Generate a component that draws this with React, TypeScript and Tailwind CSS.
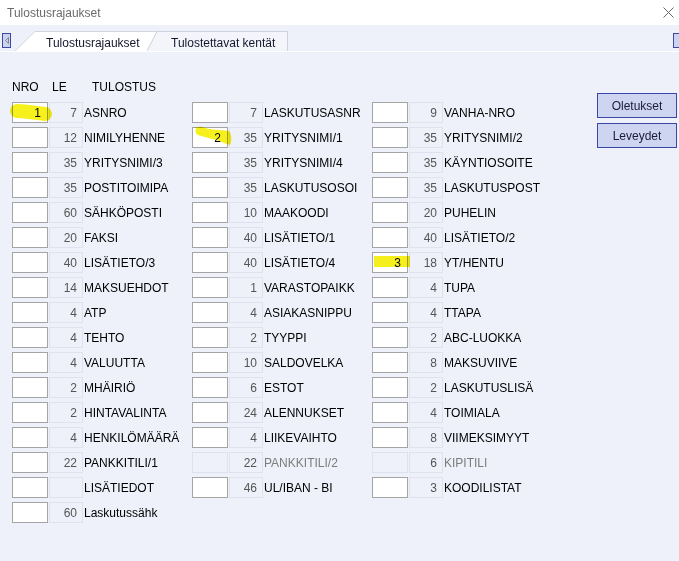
import React from "react";

type Field = {
  nro?: string;
  le?: string;
  label: string;
  disabled?: boolean;
  mark?: 1 | 2 | 3;
};

const columns: Field[][] = [
  [
    { nro: "1", le: "7", label: "ASNRO", mark: 1 },
    { le: "12", label: "NIMILYHENNE" },
    { le: "35", label: "YRITYSNIMI/3" },
    { le: "35", label: "POSTITOIMIPA" },
    { le: "60", label: "SÄHKÖPOSTI" },
    { le: "20", label: "FAKSI" },
    { le: "40", label: "LISÄTIETO/3" },
    { le: "14", label: "MAKSUEHDOT" },
    { le: "4", label: "ATP" },
    { le: "4", label: "TEHTO" },
    { le: "4", label: "VALUUTTA" },
    { le: "2", label: "MHÄIRIÖ" },
    { le: "2", label: "HINTAVALINTA" },
    { le: "4", label: "HENKILÖMÄÄRÄ" },
    { le: "22", label: "PANKKITILI/1" },
    { le: "", label: "LISÄTIEDOT" },
    { le: "60", label: "Laskutussähk" },
  ],
  [
    { le: "7", label: "LASKUTUSASNR" },
    { nro: "2", le: "35", label: "YRITYSNIMI/1", mark: 2 },
    { le: "35", label: "YRITYSNIMI/4" },
    { le: "35", label: "LASKUTUSOSOI" },
    { le: "10", label: "MAAKOODI" },
    { le: "40", label: "LISÄTIETO/1" },
    { le: "40", label: "LISÄTIETO/4" },
    { le: "1", label: "VARASTOPAIKK" },
    { le: "4", label: "ASIAKASNIPPU" },
    { le: "2", label: "TYYPPI" },
    { le: "10", label: "SALDOVELKA" },
    { le: "6", label: "ESTOT" },
    { le: "24", label: "ALENNUKSET" },
    { le: "4", label: "LIIKEVAIHTO" },
    { le: "22", label: "PANKKITILI/2", disabled: true },
    { le: "46", label: "UL/IBAN - BI" },
  ],
  [
    { le: "9", label: "VANHA-NRO" },
    { le: "35", label: "YRITYSNIMI/2" },
    { le: "35", label: "KÄYNTIOSOITE" },
    { le: "35", label: "LASKUTUSPOST" },
    { le: "20", label: "PUHELIN" },
    { le: "40", label: "LISÄTIETO/2" },
    { nro: "3", le: "18", label: "YT/HENTU", mark: 3 },
    { le: "4", label: "TUPA" },
    { le: "4", label: "TTAPA" },
    { le: "2", label: "ABC-LUOKKA" },
    { le: "8", label: "MAKSUVIIVE" },
    { le: "2", label: "LASKUTUSLISÄ" },
    { le: "4", label: "TOIMIALA" },
    { le: "8", label: "VIIMEKSIMYYT" },
    { le: "6", label: "KIPITILI", disabled: true },
    { le: "3", label: "KOODILISTAT" },
  ],
];

// highlighter strokes drawn over the order boxes
const Marker = ({ kind }: { kind: 1 | 2 | 3 }) => {
  if (kind === 1) {
    return (
      <svg className="absolute left-[-4px] top-[-1px] w-[46px] h-[22px] overflow-visible mix-blend-multiply" viewBox="0 0 46 22">
        <path d="M8 9 C 18 9.5, 28 11, 36 12" stroke="#f6f01c" strokeWidth="14" strokeLinecap="round" fill="none" />
      </svg>
    );
  }
  if (kind === 2) {
    return (
      <svg className="absolute left-[-1px] top-[-1px] w-[40px] h-[21px] overflow-visible mix-blend-multiply" viewBox="0 0 40 21">
        <path d="M2 0 C 14 2, 27 3, 37 4 C 40 8, 40 14, 38 18 C 28 15, 14 8, 2 0 Z" fill="#f6f01c" />
        <path d="M8 4 C 18 7, 27 9, 34 11" stroke="#f6f01c" strokeWidth="9" strokeLinecap="round" fill="none" />
      </svg>
    );
  }
  return <div className="absolute left-[1px] top-[3px] w-[36px] h-[11px] bg-[#f6ef1e] mix-blend-multiply" />;
};

const Row = ({ f }: { f: Field }) => (
  <div className="flex items-center h-[21px]">
    <div
      className={`relative w-[36px] h-[21px] border flex items-center justify-end pr-[6px] text-[12px] text-black ${
        f.disabled ? "border-[#dde1ec] bg-[#eef1fa]" : "border-[#a4a4a4] bg-white"
      }`}
    >
      {f.mark && <Marker kind={f.mark} />}
      <span className="relative">{f.nro ?? ""}</span>
    </div>
    <div className="ml-[1px] w-[34px] h-[21px] border border-[#dfe2ed] bg-[#eef1fa] flex items-center justify-end pr-[5px] text-[12px] text-[#555]">
      {f.le}
    </div>
    <div className={`ml-[1px] text-[12px] whitespace-nowrap ${f.disabled ? "text-[#7c7c7c]" : "text-black"}`}>
      {f.label}
    </div>
  </div>
);

const App = () => {
  return (
    <div
      className="w-[679px] h-[561px] bg-[#eef1fa] flex flex-col overflow-hidden"
      style={{ fontFamily: '"Liberation Sans", Arial, sans-serif' }}
    >
      {/* title bar */}
      <div className="h-[25px] bg-white flex items-center justify-between pl-[7px] pr-[5px]">
        <span className="text-[12px] text-[#6a6a6a]">Tulostusrajaukset</span>
        <svg width="11" height="11" viewBox="0 0 11 11" className="mb-[1px]">
          <path d="M0.5 0.5 L10.5 10.5 M10.5 0.5 L0.5 10.5" stroke="#666" strokeWidth="1" />
        </svg>
      </div>

      {/* tab strip */}
      <div className="h-[27px] flex items-end border-b border-white relative">
        <div className="w-[9px] h-[15px] mb-[3px] ml-[2px] border border-[#3c4aa6] bg-[#ccd3ee] flex items-center justify-center">
          <svg width="4" height="7" viewBox="0 0 4 7">
            <path d="M3.5 0.5 L0.5 3.5 L3.5 6.5 Z" fill="none" stroke="#888" strokeWidth="1" />
          </svg>
        </div>
        <div className="relative ml-[4px] w-[142px] h-[20px]">
          <svg className="absolute inset-0" width="142" height="20" viewBox="0 0 142 20">
            <path d="M0 20 L20 0.5 L142 0.5 L132 20 Z" fill="#ffffff" />
            <path d="M0 20 L20 0.5 L142 0.5" fill="none" stroke="#d3d6df" strokeWidth="1" />
          </svg>
          <span className="absolute left-[31px] top-[3px] text-[12px] text-[#15162c]">Tulostusrajaukset</span>
        </div>
        <div className="relative ml-[-10px] w-[141px] h-[20px]">
          <svg className="absolute inset-0" width="141" height="20" viewBox="0 0 141 20">
            <path d="M0 20 L10 0.5 L140.5 0.5 L140.5 20 Z" fill="#f3f5fb" />
            <path d="M0 20 L10 0.5 L140.5 0.5 L140.5 20" fill="none" stroke="#cdd1db" strokeWidth="1" />
          </svg>
          <span className="absolute left-[24px] top-[3px] text-[12px] text-[#15162c]">Tulostettavat kentät</span>
        </div>
        <div className="ml-auto w-[9px] h-[15px] mb-[3px] mr-[-3px] border border-[#3c4aa6] bg-[#ccd3ee]" />
      </div>

      {/* field grid */}
      <div className="flex pt-[28px] pl-[12px]">
        <div className="flex flex-col">
          <div className="flex h-[14px] items-center text-[12px] text-black">
            <span className="w-[40px]">NRO</span>
            <span className="w-[40px]">LE</span>
            <span>TULOSTUS</span>
          </div>
          <div className="flex mt-[8px]">
            {columns.map((col, ci) => (
              <div key={ci} className="w-[180px] flex flex-col gap-[4px]">
                {col.map((f) => (
                  <Row key={f.label} f={f} />
                ))}
              </div>
            ))}
          </div>
        </div>
        <div className="ml-[45px] mt-[13px] flex flex-col gap-[5px]">
          <button className="w-[80px] h-[25px] border border-[#3b47a6] bg-[#cdd5f0] text-[12px] text-[#1b1b36]">
            Oletukset
          </button>
          <button className="w-[80px] h-[25px] border border-[#3b47a6] bg-[#cdd5f0] text-[12px] text-[#1b1b36]">
            Leveydet
          </button>
        </div>
      </div>
    </div>
  );
};

export default App;
